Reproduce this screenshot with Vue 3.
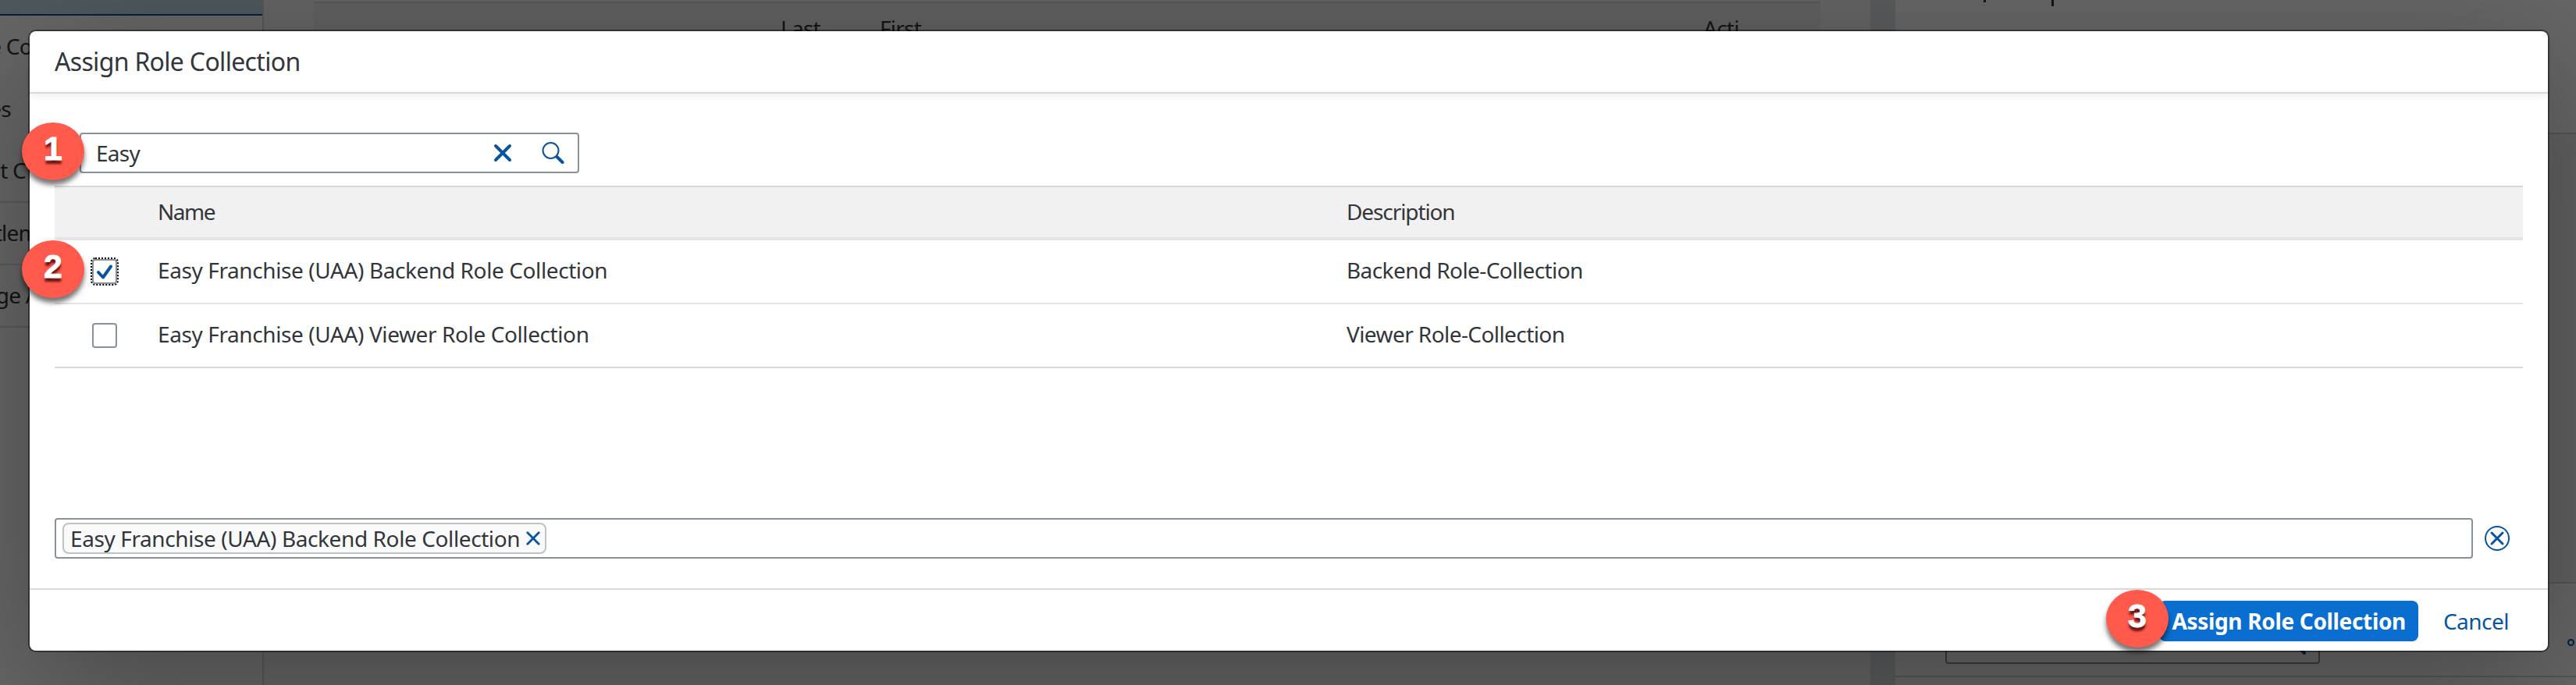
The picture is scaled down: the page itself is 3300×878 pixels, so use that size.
<script setup>
const navItems = ['e Co', 'es', 't C', 'tlem', 'ge A']
const rows = [
  { name: 'Easy Franchise (UAA) Backend Role Collection', description: 'Backend Role-Collection', checked: true },
  { name: 'Easy Franchise (UAA) Viewer Role Collection', description: 'Viewer Role-Collection', checked: false },
]
</script>

<template>
  <div class="page">
    <div class="backdrop">
      <nav class="nav">
        <div class="nav-selected"></div>
        <div v-for="(item, i) in navItems" :key="item" :class="['nav-item', 'nav-' + i]"><span>{{ item }}</span></div>
      </nav>
      <main class="main">
        <div class="main-table">
          <span class="c-last">Last</span><span class="c-first">First</span><span class="c-acti">Acti</span>
        </div>
      </main>
      <div class="gutter"></div>
      <aside class="aside">
        <div class="aside-top"><i class="tick"></i><i class="tick tall"></i></div>
        <div class="aside-mid"></div>
        <div class="aside-low">
          <div class="aside-input"><svg viewBox="0 0 8 8"><path d="M1 1L6 6" /></svg></div>
          <i class="dot"></i>
        </div>
        <div class="aside-end"></div>
      </aside>
    </div>
    <div class="overlay"></div>

    <section class="dialog">
      <header class="head"><span class="t title">Assign Role Collection</span></header>
      <div class="body">
        <div class="search">
          <span class="t easy">Easy</span>
          <svg class="clear" viewBox="0 0 24 24"><path d="M3 3L21 21M21 3L3 21" /></svg>
          <svg class="mag" viewBox="0 0 30 30"><circle cx="12.5" cy="12" r="10" /><path d="M20.5 20L27.5 27" /></svg>
        </div>
        <div class="table">
          <div class="row thead"><span></span><span class="t h-name">Name</span><span class="t h-desc">Description</span></div>
          <div v-for="r in rows" :key="r.name" class="row">
            <span class="check" :class="{ focus: r.checked }">
              <svg v-if="r.checked" viewBox="0 0 28 28"><path d="M6 15L12 21.5L22 7.5" /></svg>
            </span>
            <span class="t cell long">{{ r.name }}</span>
            <span class="t cell">{{ r.description }}</span>
          </div>
        </div>
        <div class="picked">
          <div class="field">
            <div class="token">
              <span class="t long">{{ rows[0].name }}</span>
              <svg viewBox="0 0 18 18"><path d="M1.8 1.8L16.2 16.2M16.2 1.8L1.8 16.2" /></svg>
            </div>
          </div>
          <svg class="reset" viewBox="0 0 32 32"><circle cx="16" cy="16" r="15" /><path d="M9 9L23 23M23 9L9 23" /></svg>
        </div>
      </div>
      <footer class="foot">
        <button class="primary"><span>Assign Role Collection</span></button>
        <button class="ghost"><span>Cancel</span></button>
      </footer>
    </section>

    <div class="badge b1">1</div>
    <div class="badge b2">2</div>
    <div class="badge b3">3</div>
  </div>
</template>

<style>
body { background: #666; overflow: hidden; }
</style>

<style scoped>
* { box-sizing: border-box; }
.page { position: relative; width: 3300px; height: 878px; overflow: hidden; font: 28px/40px "Noto Sans", "Open Sans", sans-serif; color: #32363a; letter-spacing: -0.75px; }
.t { white-space: nowrap; }
.long { letter-spacing: -0.4px; }
.backdrop { display: flex; height: 878px; background: #fff; }
.nav { width: 338px; border-right: 2px solid #d9d9d9; }
.nav-selected { height: 20px; background: #c3dbe8; border-bottom: 2px solid #0854a0; }
.nav-item { height: 80px; display: flex; align-items: center; white-space: nowrap; padding-bottom: 2px; }
.nav-item span { display: flex; justify-content: flex-end; white-space: pre; }
.nav-item.nav-0 span { width: 41px; }
.nav-item.nav-1 span { width: 14px; }
.nav-item.nav-2 span { width: 33px; }
.nav-item.nav-3 span { width: 49px; }
.nav-item.nav-4 span { width: 50px; }
.nav-2, .nav-3, .nav-4 { border-bottom: 2px solid #e0e0e0; }
.main { width: 2058px; padding: 2px 64px; background: #fafafa; }
.main-table { display: grid; grid-template-columns: 598px 127px 1055px 1fr; height: 200px; background: #f0f0f0; border-top: 2px solid #d9d9d9; padding-top: 12px; }
.c-last { grid-column: 2; }
.gutter { width: 32px; background: #dfe4e5; }
.aside { flex: 1; }
.aside-top { display: flex; gap: 84px; padding-left: 113px; height: 172px; border-bottom: 2px solid #d5d5d5; }
.tick { width: 3px; height: 3px; background: #32363a; }
.tall { height: 8px; }
.aside-mid { height: 576px; background: #f3f3f3; border-bottom: 2px solid #d5d5d5; }
.aside-low { height: 120px; border-bottom: 2px solid #d5d5d5; padding: 50px 2px 16px 64px; display: flex; justify-content: space-between; }
.aside-input { width: 480px; height: 53px; border: 2px solid #89919a; border-radius: 4px; display: flex; justify-content: flex-end; padding: 31px 16px 0 0; }
.aside-input svg { width: 8px; height: 8px; stroke-width: 4; }
.dot { width: 9px; height: 9px; margin-top: 21px; border: 2px solid #0854a0; border-radius: 50%; }
.overlay { position: absolute; inset: 0; background: rgba(0, 0, 0, 0.6); }

.dialog { position: absolute; left: 38px; top: 40px; width: 3226px; height: 794px; display: flex; flex-direction: column; background: #fff; border-radius: 8px; box-shadow: 0 0 0 2px rgba(0, 0, 0, 0.42), 0 40px 160px rgba(0, 0, 0, 0.3); }
.head { height: 80px; flex: none; display: flex; align-items: center; padding: 0 32px; border-bottom: 2px solid #d9d9d9; box-shadow: 0 4px 8px rgba(0, 0, 0, 0.06); }
.title { font-size: 32px; letter-spacing: -0.68px; }
.body { flex: 1; padding: 50px 32px 0; }
.search { width: 640px; height: 52px; margin-left: 32px; border: 2px solid #89919a; border-radius: 4px; display: flex; align-items: center; padding: 0 17px 0 19px; }
.easy { flex: 1; }
svg { fill: none; stroke: #0854a0; stroke-linecap: round; stroke-linejoin: round; }
.clear { width: 24px; height: 24px; stroke-width: 4; margin-right: 37px; }
.mag { width: 30px; height: 30px; stroke-width: 2; }
.mag path { stroke-width: 4; }
.table { margin-top: 16px; border-top: 2px solid #d9d9d9; }
.row { display: grid; grid-template-columns: 132px 1523px 1fr; align-items: center; height: 82px; border-bottom: 2px solid #e5e5e5; }
.row:last-child { border-bottom-color: #d9d9d9; }
.cell { padding-bottom: 4px; letter-spacing: -0.58px; }
.cell.long { letter-spacing: -0.4px; }
.thead { height: 68px; background: #f1f1f1; border-bottom-width: 4px; padding-bottom: 2px; }
.h-name { letter-spacing: -1.5px; }
.h-desc { letter-spacing: -1.1px; }
.check { width: 32px; height: 32px; margin-left: 48px; border: 2px solid #89919a; border-radius: 4px; }
.check svg { display: block; width: 28px; height: 28px; stroke-width: 4; }
.focus { outline: 2px dotted #000; }
.picked { display: flex; align-items: center; margin-top: 192px; }
.field { width: 3098px; height: 52px; border: 2px solid #89919a; border-radius: 4px; padding: 4px 8px; }
.token { width: 620px; height: 40px; display: flex; align-items: center; justify-content: space-between; padding: 0 6px 0 8px; background: #fafafa; border: 2px solid #c2c2c2; border-radius: 8px; }
.token svg { width: 18px; height: 18px; stroke-width: 2.8; }
.reset { width: 32px; height: 32px; margin-left: 15px; stroke-width: 2; }
.reset path { stroke-width: 3; }
.foot { height: 80px; flex: none; border-top: 2px solid #d9d9d9; display: flex; justify-content: flex-end; padding: 14px 32px 0; }
button { height: 52px; border: 0; border-radius: 8px; font: inherit; letter-spacing: inherit; padding: 0; white-space: nowrap; }
.primary { width: 332px; background: #0a6ed1; color: #fff; font-weight: 700; text-align: right; padding-right: 16px; letter-spacing: -0.33px; }
.ghost { width: 118px; margin-left: 16px; background: none; color: #0854a0; padding-right: 2px; letter-spacing: -0.5px; }

.badge { position: absolute; width: 80px; height: 74px; border-radius: 50%; background: #ff5a4c; color: #fff; font: bold 43px/66px "Liberation Sans", Arial, sans-serif; letter-spacing: 0; text-align: center; -webkit-text-stroke: 0.8px #fff; text-shadow: 0 5px 3px rgba(60, 0, 0, 0.8); box-shadow: 0 6px 6px rgba(0, 0, 0, 0.55); }
.b1 { left: 28px; top: 157px; }
.b2 { left: 28px; top: 308px; }
.b3 { left: 2698px; top: 756px; }
</style>
